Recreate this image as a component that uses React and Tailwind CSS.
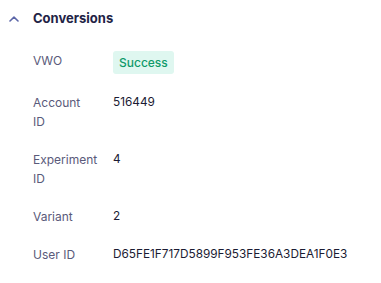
import React from "react";

const rows = [
  { label: ["Account", "ID"], value: "516449" },
  { label: ["Experiment", "ID"], value: "4" },
  { label: ["Variant"], value: "2" },
  { label: ["User ID"], value: "D65FE1F717D5899F953FE36A3DEA1F0E3" },
];

const App = () => {
  return (
    <div className="w-[381px] h-[283px] bg-white font-['Inter',sans-serif] text-[12px]">
      <div className="flex items-center gap-[14px] pl-[9px] pt-[10px] h-[17px] box-content">
        <svg width="10" height="6" viewBox="0 0 10 6" fill="none">
          <path d="M1 5L5 1.2L9 5" stroke="#5c66a8" strokeWidth="1.6" strokeLinecap="round" strokeLinejoin="round" />
        </svg>
        <h2 className="text-[13px] font-bold text-[#1f2346] leading-[17px]">Conversions</h2>
      </div>

      <div className="flex flex-col gap-[19px] pl-[33px] pt-[24px]">
        <div className="flex">
          <div className="w-[80px] shrink-0 leading-[19px] text-[#5a5a7a]">VWO</div>
          <span className="rounded-[3px] bg-[#dff7f0] px-[6px] h-[23px] flex items-center text-[#0f9a6a] font-medium">
            Success
          </span>
        </div>
        {rows.map((r) => (
          <div key={r.value} className="flex leading-[19px]">
            <div className="w-[80px] shrink-0 text-[#5a5a7a]">
              {r.label.map((l) => (
                <div key={l}>{l}</div>
              ))}
            </div>
            <div className="text-[11.8px] text-[#1b1b33]">{r.value}</div>
          </div>
        ))}
      </div>
    </div>
  );
};

export default App;
